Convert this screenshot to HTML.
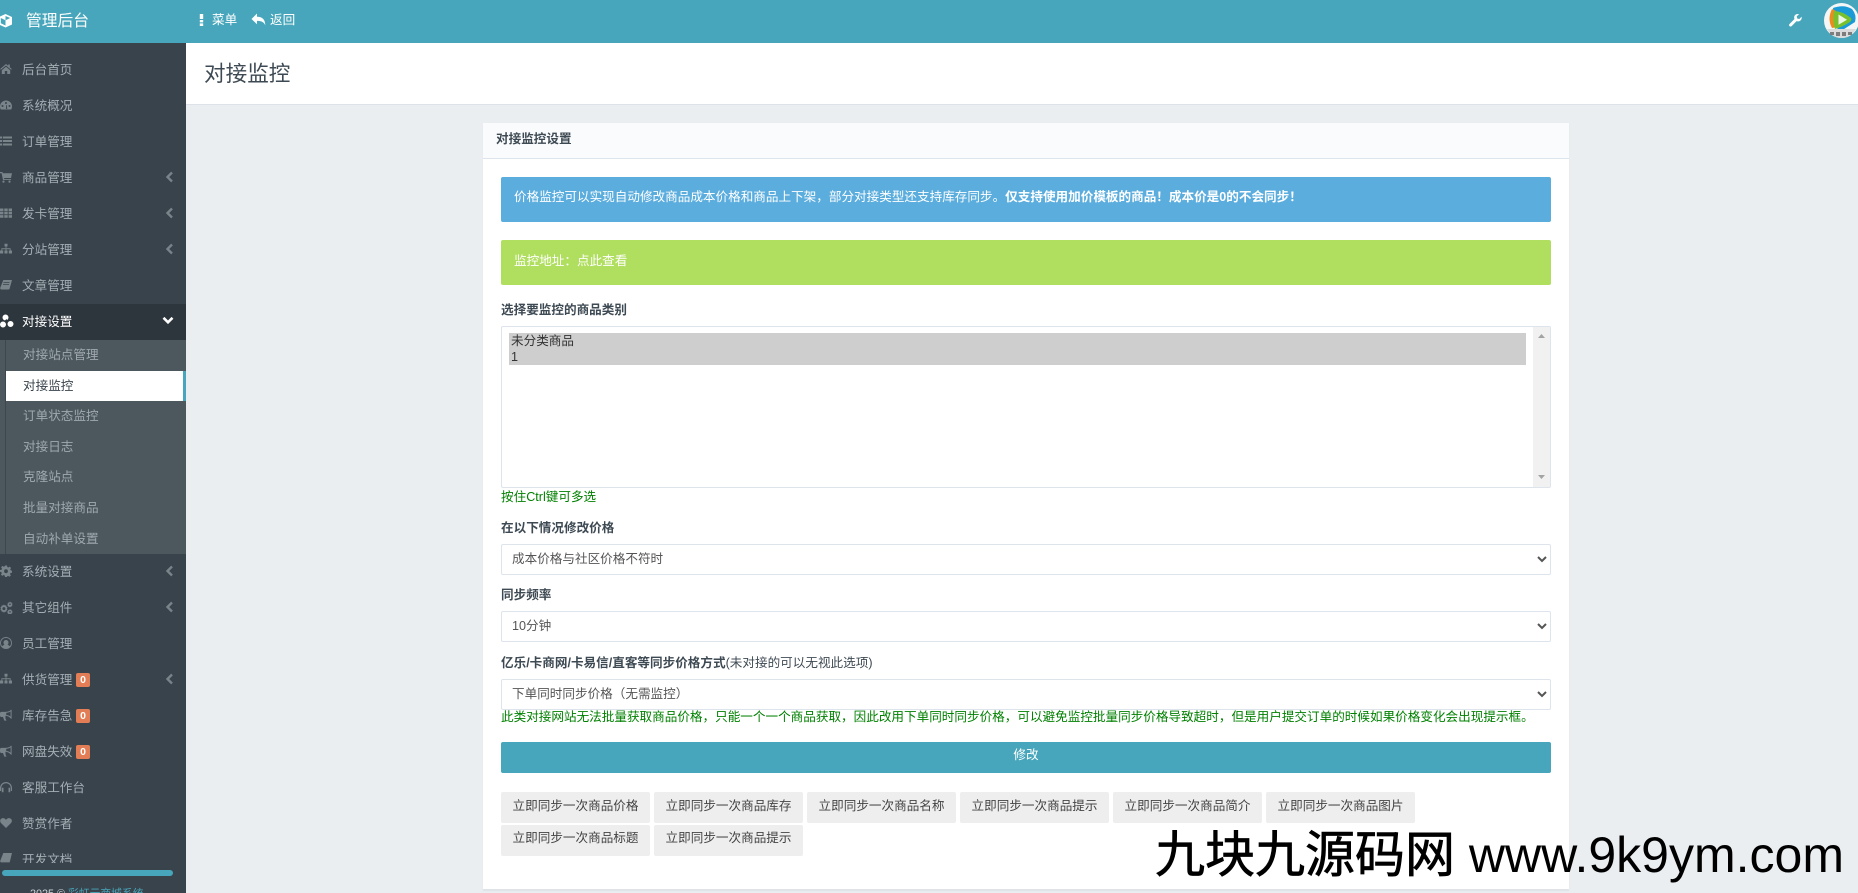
<!DOCTYPE html>
<html lang="zh"><head><meta charset="utf-8"><title>对接监控</title>
<style>
html,body{margin:0;padding:0;width:1858px;height:893px;overflow:hidden;background:#ebeef1}
body{font-family:"Liberation Sans","Noto Sans CJK SC",sans-serif;font-size:12.6px;color:#3e4a53;position:relative}
.a{position:absolute}
.t{position:absolute;white-space:nowrap;line-height:20px}
svg{position:absolute;display:block}
.n{color:#a3aeb5;left:22px}
.s{color:#9fa9af;left:23px}
.ic{fill:#78838a}
.ch{fill:none;stroke:#78838a;stroke-width:2.4}
.b{font-weight:700}
.bd{position:absolute;left:76px;width:14px;height:14px;border-radius:2px;background:#e27d55;color:#fff;font-weight:700;font-size:10.5px;line-height:14px;text-align:center}
select{position:absolute;left:501px;width:1050px;height:31px;box-sizing:border-box;border:1px solid #dee4ec;border-radius:2px;background:#fff;color:#555;font:12.6px "Liberation Sans","Noto Sans CJK SC",sans-serif;padding:0 6px 2px;outline:none}
.btn{position:absolute;width:149px;height:31px;background:#eee;border-radius:2px;color:#444;text-align:center;line-height:29px;white-space:nowrap}
.g{color:#008000}
</style></head><body>

<div class="a" style="left:0;top:0;width:1858px;height:43px;background:#47a6bb"></div>
<svg style="left:-2px;top:13px" width="15" height="15" viewBox="0 0 15 15"><path d="M7.500 1 14 4v7.500L7.500 14.500 1 11.500V4zM7.500 7.200 2.800 5v5.300l4.700 2.200zM7.500 7.200l4.700-2.200-4.700-2z" fill="#fff" fill-rule="evenodd"/></svg>
<div class="t" style="left:26px;top:12px;font-size:15.75px;color:#fff">管理后台</div>
<svg style="left:199px;top:14px" width="5" height="12" viewBox="0 0 5 12"><path d="M.8 0h3.400v5H.8zM.8 6h3.400v2.400H.8zM.8 9.400h3.400V12H.8z" fill="#fff"/></svg>
<div class="t" style="left:212px;top:10px;color:#fff">菜单</div>
<svg style="left:251px;top:13px" width="15" height="13" viewBox="0 0 15 13"><path d="M6 .5v3.200c4.500 0 8.300 2 8.300 8.800-1.200-3.600-4-4.600-8.300-4.600v3.400L.5 6z" fill="#fff"/></svg>
<div class="t" style="left:270px;top:10px;color:#fff">返回</div>
<svg style="left:1789px;top:14px" width="13" height="13" viewBox="0 0 13 13"><path d="M12.600 2.800 10.300 5 8.200 4.500 7.700 2.400 10 .2C8.300-.3 6.300.3 5.500 1.900 5 3 5 4.100 5.500 5L.5 10c-.6.6-.6 1.500 0 2.100.6.600 1.500.600 2.100 0l5-5c1 .5 2.100.4 3.200-.1 1.500-.9 2.200-2.500 1.800-4.200z" fill="#fff"/></svg>
<svg style="left:1824px;top:3px" width="35" height="35" viewBox="0 0 35 35">
<circle cx="17.500" cy="17.500" r="17.500" fill="#f5f7f7"/>
<path d="M9 5Q20 1 28 6Q33 12 31 19L17 28L11 24z" fill="#1a9ad6"/>
<path d="M8 6Q3 16 8 25L14 24L12 8z" fill="#ef8b1e"/>
<path d="M10 8Q18 8 27 15Q28 17 26 19Q18 24 11 26Q8 17 10 8z" fill="#79c12c"/>
<path d="M14.500 11.500 23 16.700 14.500 21.800z" fill="#eef6e4"/>
<path d="M3 26H32Q27 35 17.500 35 8 35 3 26z" fill="#dcdcdc"/>
<path d="M6 29h4v3H6zM12 29h4v4h-4zM18 29h4v4h-4zM24 29h4v3h-4z" fill="#7d7d7d"/>
</svg>

<div class="a" style="left:0;top:43px;width:186px;height:850px;background:#39434b"></div>
<div class="a" style="left:0;top:304px;width:186px;height:36px;background:#2e363d"></div>
<div class="a" style="left:0;top:340px;width:186px;height:214px;background:#4c575e"></div>
<div class="a" style="left:5px;top:340px;width:1px;height:214px;background:#3d474f"></div>
<div class="a" style="left:6px;top:371px;width:180px;height:30px;background:#fff"></div>
<div class="a" style="left:183px;top:371px;width:3px;height:30px;background:#47a6bb"></div>

<!-- sidebar icons -->
<svg class="ic" style="left:0;top:63px" width="12" height="12" viewBox="0 0 12 12"><path d="M6 1 .2 6l.7.8L6 2.500l5.100 4.300.7-.8-2-1.800V1.500H8.200v1.200zM1.800 7.200V11h3V8h2.400v3h3V7.200L6 3.700z"/></svg>
<svg class="ic" style="left:0;top:99px" width="12" height="12" viewBox="0 0 12 12"><path d="M6 1.500A6 6 0 0 0 0 7.500c0 1.100.3 2.100.8 3h10.400c.5-.9.800-1.900.8-3a6 6 0 0 0-6-6zM6 3a1 1 0 1 1 0 2 1 1 0 0 1 0-2zM2.500 6a1 1 0 1 1 0 2 1 1 0 0 1 0-2zm7 0a1 1 0 1 1 0 2 1 1 0 0 1 0-2zM6 9.800 6.200 6h.6L7.200 9.800A1 1 0 0 1 6 9.800z" fill-rule="evenodd"/></svg>
<svg class="ic" style="left:0;top:135px" width="12" height="12" viewBox="0 0 12 12"><path d="M0 1.500h2.200v2H0zM3 1.500h9v2H3zM0 5h2.200v2H0zM3 5h9v2H3zM0 8.500h2.200v2H0zM3 8.500h9v2H3z"/></svg>
<svg class="ic" style="left:0;top:171px" width="12" height="12" viewBox="0 0 12 12"><path d="M0 1h2.400l.4 1.300H12l-1 4.700H4l.3 1.100H11V9H3L1.600 2.200H0zM3.500 9.500a1.100 1.100 0 1 1 0 2.200 1.100 1.100 0 0 1 0-2.200zM9.500 9.500a1.100 1.100 0 1 1 0 2.200 1.100 1.100 0 0 1 0-2.200z"/></svg>
<svg class="ic" style="left:0;top:207px" width="12" height="12" viewBox="0 0 12 12"><path d="M0 1.500h3.400v2.600H0zM4.300 1.500h3.400v2.600H4.300zM8.600 1.500H12v2.600H8.600zM0 4.800h3.400v2.600H0zM4.300 4.800h3.400v2.600H4.300zM8.600 4.800H12v2.600H8.600zM0 8.100h3.400v2.600H0zM4.300 8.100h3.400v2.600H4.300zM8.600 8.100H12v2.600H8.600z"/></svg>
<svg class="ic" style="left:0;top:243px" width="12" height="12" viewBox="0 0 12 12"><path d="M4.500.8h3v2.700H6.400v1.800h4.200v2.200H12v3H8.800v-3h1V6.200H6.400v1.300h1.100v3h-3v-3h1.100V6.200H2.200v1.300h1v3H0v-3h1.400V5.300h4.200V3.500H4.500z"/></svg>
<svg class="ic" style="left:0;top:279px" width="12" height="12" viewBox="0 0 12 12"><path d="M3.300 1H12L9.700 9.400c-.2.700-.6 1.100-1.300 1.100H1.500C.6 10.500 0 9.800.2 8.900zM3.500 3h6v.8h-6zM3 5h6v.8H3z" fill-rule="evenodd"/></svg>
<svg style="left:0;top:314px" width="14" height="14" viewBox="0 0 14 14"><path d="M5.500.5a3 3 0 1 1 0 6 3 3 0 0 1 0-6zM10.500 7a3 3 0 1 1 0 6 3 3 0 0 1 0-6zM3 7.500a3 3 0 1 1 0 6 3 3 0 0 1 0-6z" fill="#fff"/><path d="M6.500 5 8 7.500 6.500 9.500 4.500 7z" fill="#2e363d"/></svg>
<svg class="ic" style="left:0;top:565px" width="12" height="12" viewBox="0 0 12 12"><path d="M5 .5h2l.3 1.500 1.100.5 1.300-.9 1.400 1.400-.9 1.300.5 1.100L12 5.700v2l-1.500.3-.5 1.100.9 1.300-1.400 1.400-1.300-.9-1.100.5L6.800 12H5l-.3-1.500-1.100-.5-1.300.9L.9 9.500l.9-1.300-.5-1.100L0 6.800V5l1.500-.3.5-1.100-.9-1.300L2.500.9l1.300.9 1-.5zM6 4.300a1.900 1.900 0 1 0 0 3.800 1.900 1.900 0 0 0 0-3.800z" fill-rule="evenodd"/></svg>
<svg class="ic" style="left:0;top:601px" width="13" height="13" viewBox="0 0 13 13"><path d="M4 3.500l.8 1 1.300-.1.400 1.300 1 .7-.6 1.200.6 1.200-1 .7-.4 1.300-1.300-.1-.8 1-.9-1-1.300.1L1.400 9.500.4 8.800 1 7.600.4 6.400l1-.7.4-1.300 1.300.1zM3.900 6.100a1.500 1.500 0 1 0 0 3 1.500 1.500 0 0 0 0-3zM10 .5l.5.8h.9l.3.8.8.5-.4.9.4.9-.8.5-.3.8h-.9l-.5.8-.7-.7-.9.1-.3-.9-.8-.5.4-.9-.4-.9.8-.5.3-.8.9.1zM10 2.500a.8.8 0 1 0 0 1.600.8.8 0 0 0 0-1.600zM10 8l.5.8h.9l.3.8.8.5-.4.9.4.9-.8.5-.3.8h-.9l-.5.8-.7-.7-.9.1-.3-.9-.8-.5.4-.9-.4-.9.8-.5.3-.8.9.1zM10 10a.8.8 0 1 0 0 1.600.8.8 0 0 0 0-1.600z" fill-rule="evenodd"/></svg>
<svg class="ic" style="left:0;top:637px" width="12" height="12" viewBox="0 0 12 12"><path d="M6 0a6 6 0 1 1 0 12A6 6 0 0 1 6 0zM6 1A5 5 0 0 0 2.200 9.300C3 8.300 4 8 4.500 7.800 3.800 7.200 3.500 6.300 3.500 5.500a2.500 2.500 0 0 1 5 0c0 .8-.3 1.700-1 2.300.5.200 1.500.5 2.300 1.500A5 5 0 0 0 6 1z" fill-rule="evenodd"/></svg>
<svg class="ic" style="left:0;top:673px" width="12" height="12" viewBox="0 0 12 12"><path d="M4.500.8h3v2.700H6.400v1.800h4.200v2.200H12v3H8.800v-3h1V6.200H6.400v1.300h1.100v3h-3v-3h1.100V6.200H2.200v1.300h1v3H0v-3h1.400V5.300h4.200V3.500H4.500z"/></svg>
<svg class="ic" style="left:0;top:709px" width="12" height="12" viewBox="0 0 12 12"><path d="M11 .8h.6v9h-.6C10 8.500 8 6.900 5.500 6.800v2.800l1 2H4.300L3 8H1.200C.5 8 0 7.200 0 6.200V4.600c0-1 .5-1.700 1.200-1.700H5C8 2.900 10 2 11 .8zM10.600 2.400C9.500 3.300 7.800 3.700 6.200 3.900v2.100c1.700.1 3.300.7 4.400 1.600z" fill-rule="evenodd"/></svg>
<svg class="ic" style="left:0;top:745px" width="12" height="12" viewBox="0 0 12 12"><path d="M11 .8h.6v9h-.6C10 8.500 8 6.900 5.500 6.800v2.800l1 2H4.300L3 8H1.200C.5 8 0 7.200 0 6.200V4.600c0-1 .5-1.700 1.200-1.700H5C8 2.900 10 2 11 .8zM10.600 2.400C9.500 3.300 7.800 3.700 6.200 3.900v2.100c1.700.1 3.300.7 4.400 1.600z" fill-rule="evenodd"/></svg>
<svg class="ic" style="left:0;top:781px" width="12" height="12" viewBox="0 0 12 12"><path d="M6 1a6 6 0 0 1 6 6v3h-1.200V7A4.800 4.800 0 0 0 1.200 7v3H0V7a6 6 0 0 1 6-6zM1.800 6.800h1.700v4.400H1.800zM8.500 6.800h1.700v4.400H8.500z"/></svg>
<svg class="ic" style="left:0;top:817px" width="12" height="12" viewBox="0 0 12 12"><path d="M6 11 1 6C-.3 4.600 0 2.500 1.200 1.700 2.800.7 5 1 6 3c1-2 3.200-2.300 4.800-1.300C12 2.500 12.300 4.600 11 6z"/></svg>
<svg class="ic" style="left:0;top:853px" width="12" height="10" viewBox="0 0 12 10"><path d="M3.300 0H12L9.700 9.400H1.500C.6 9.400 0 8.800.2 7.900z"/></svg>

<!-- chevrons -->
<svg class="ch" style="left:165px;top:171px" width="9" height="12" viewBox="0 0 9 12"><path d="M7 1.500 2.500 6 7 10.500"/></svg>
<svg class="ch" style="left:165px;top:207px" width="9" height="12" viewBox="0 0 9 12"><path d="M7 1.500 2.500 6 7 10.500"/></svg>
<svg class="ch" style="left:165px;top:243px" width="9" height="12" viewBox="0 0 9 12"><path d="M7 1.500 2.500 6 7 10.500"/></svg>
<svg class="ch" style="left:165px;top:565px" width="9" height="12" viewBox="0 0 9 12"><path d="M7 1.500 2.500 6 7 10.500"/></svg>
<svg class="ch" style="left:165px;top:601px" width="9" height="12" viewBox="0 0 9 12"><path d="M7 1.500 2.500 6 7 10.500"/></svg>
<svg class="ch" style="left:165px;top:673px" width="9" height="12" viewBox="0 0 9 12"><path d="M7 1.500 2.500 6 7 10.500"/></svg>
<svg style="left:162px;top:316px" width="12" height="9" viewBox="0 0 12 9"><path d="M1.500 1.800 6 6.300l4.500-4.500" fill="none" stroke="#fff" stroke-width="2.600"/></svg>

<!-- sidebar text -->
<div class="t n" style="top:60px">后台首页</div>
<div class="t n" style="top:96px">系统概况</div>
<div class="t n" style="top:132px">订单管理</div>
<div class="t n" style="top:168px">商品管理</div>
<div class="t n" style="top:204px">发卡管理</div>
<div class="t n" style="top:240px">分站管理</div>
<div class="t n" style="top:276px">文章管理</div>
<div class="t n" style="top:312px;color:#fff">对接设置</div>
<div class="t s" style="top:345px">对接站点管理</div>
<div class="t" style="left:23px;top:376px;color:#39434b">对接监控</div>
<div class="t s" style="top:406px">订单状态监控</div>
<div class="t s" style="top:437px">对接日志</div>
<div class="t s" style="top:467px">克隆站点</div>
<div class="t s" style="top:498px">批量对接商品</div>
<div class="t s" style="top:529px">自动补单设置</div>
<div class="t n" style="top:562px">系统设置</div>
<div class="t n" style="top:598px">其它组件</div>
<div class="t n" style="top:634px">员工管理</div>
<div class="t n" style="top:670px">供货管理</div><div class="bd" style="top:673px">0</div>
<div class="t n" style="top:706px">库存告急</div><div class="bd" style="top:709px">0</div>
<div class="t n" style="top:742px">网盘失效</div><div class="bd" style="top:745px">0</div>
<div class="t n" style="top:778px">客服工作台</div>
<div class="t n" style="top:814px">赞赏作者</div>
<div class="t n" style="top:850px">开发文档</div>
<div class="a" style="left:0;top:863px;width:186px;height:30px;background:#39434b;overflow:hidden">
  <div class="a" style="left:2px;top:7px;width:171px;height:6px;border-radius:3px;background:#47a6bb"></div>
  <div class="t" style="left:30px;top:21px;font-size:10.8px;color:#c9d0d5">2025 © <span style="color:#47a6bb">彩虹云商城系统</span></div>
</div>

<!-- title bar -->
<div class="a" style="left:186px;top:43px;width:1672px;height:61px;background:#fff;border-bottom:1px solid #dde2e8"></div>
<div class="t" style="left:204px;top:60px;font-size:21.6px;line-height:28px;color:#3e4a53">对接监控</div>

<!-- card -->
<div class="a" style="left:483px;top:123px;width:1086px;height:766px;background:#fff;box-shadow:0 2px 1px rgba(200,206,212,.35)"></div>
<div class="a" style="left:483px;top:123px;width:1086px;height:35px;background:#fafbfc;border-bottom:1px solid #dee4ec"></div>
<div class="t b" style="left:496px;top:129px;color:#3e4a53">对接监控设置</div>

<div class="a" style="left:501px;top:177px;width:1050px;height:45px;background:#5badde;border-radius:2px"></div>
<div class="t" style="left:514px;top:187px;color:#fff">价格监控可以实现自动修改商品成本价格和商品上下架，部分对接类型还支持库存同步。<b>仅支持使用加价模板的商品！成本价是0的不会同步！</b></div>
<div class="a" style="left:501px;top:240px;width:1050px;height:45px;background:#b0df5f;border-radius:2px"></div>
<div class="t" style="left:514px;top:251px;color:#fff">监控地址：点此查看</div>

<div class="t b" style="left:501px;top:300px">选择要监控的商品类别</div>
<div class="a" style="left:501px;top:326px;width:1050px;height:162px;box-sizing:border-box;border:1px solid #dee4ec;border-radius:2px;background:#fff"></div>
<div class="a" style="left:509px;top:333px;width:1017px;height:32px;background:#cecece"></div>
<div class="t" style="left:511px;top:333px;line-height:16px;color:#333">未分类商品</div>
<div class="t" style="left:511px;top:349px;line-height:16px;color:#333">1</div>
<div class="a" style="left:1533px;top:327px;width:17px;height:160px;background:#f1f1f1"></div>
<svg style="left:1537px;top:333px" width="9" height="6" viewBox="0 0 9 6"><path d="M4.500 1 8 5H1z" fill="#a3a3a3"/></svg>
<svg style="left:1537px;top:474px" width="9" height="6" viewBox="0 0 9 6"><path d="M4.500 5 8 1H1z" fill="#a3a3a3"/></svg>
<div class="t g" style="left:501px;top:487px">按住Ctrl键可多选</div>

<div class="t b" style="left:501px;top:518px">在以下情况修改价格</div>
<select style="top:544px"><option>成本价格与社区价格不符时</option></select>
<div class="t b" style="left:501px;top:585px">同步频率</div>
<select style="top:611px"><option>10分钟</option></select>
<div class="t" style="left:501px;top:653px"><b>亿乐/卡商网/卡易信/直客等同步价格方式</b>(未对接的可以无视此选项)</div>
<select style="top:679px"><option>下单同时同步价格（无需监控）</option></select>
<div class="t g" style="left:501px;top:707px">此类对接网站无法批量获取商品价格，只能一个一个商品获取，因此改用下单同时同步价格，可以避免监控批量同步价格导致超时，但是用户提交订单的时候如果价格变化会出现提示框。</div>

<div class="a" style="left:501px;top:742px;width:1050px;height:31px;background:#47a6bb;border-radius:2px;color:#fff;text-align:center;line-height:26px">修改</div>

<div class="btn" style="left:501px;top:792px">立即同步一次商品价格</div>
<div class="btn" style="left:654px;top:792px">立即同步一次商品库存</div>
<div class="btn" style="left:807px;top:792px">立即同步一次商品名称</div>
<div class="btn" style="left:960px;top:792px">立即同步一次商品提示</div>
<div class="btn" style="left:1113px;top:792px">立即同步一次商品简介</div>
<div class="btn" style="left:1266px;top:792px">立即同步一次商品图片</div>
<div class="btn" style="left:501px;top:825px;line-height:27px">立即同步一次商品标题</div>
<div class="btn" style="left:654px;top:825px;line-height:27px">立即同步一次商品提示</div>

<div class="t" style="left:1155px;top:827px;font-size:50px;line-height:56px;color:#000"><span style="-webkit-text-stroke:.7px #000">九块九源码网</span> www.9k9ym.com</div>
</body></html>
